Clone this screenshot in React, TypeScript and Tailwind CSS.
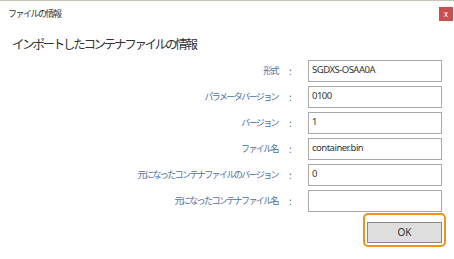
import React from 'react';

const rows: { label: string; value: string }[] = [
  { label: '形式', value: 'SGDXS-OSAA0A' },
  { label: 'パラメータバージョン', value: '0100' },
  { label: 'バージョン', value: '1' },
  { label: 'ファイル名', value: 'container.bin' },
  { label: '元になったコンテナファイルのバージョン', value: '0' },
  { label: '元になったコンテナファイル名', value: '' },
];

const jp = { fontFamily: '"Noto Sans CJK JP", "Noto Sans", sans-serif' };
const latin = { fontFamily: '"Noto Sans", "Noto Sans CJK JP", sans-serif' };

export default function App() {
  return (
    <div className="w-[454px] h-[259px] bg-white border-t border-[#c9c3b3] overflow-hidden" style={jp}>
      {/* title bar */}
      <div className="flex items-start justify-between pl-[8px] pr-[1px] pt-[6px]">
        <span className="text-[9px] leading-[14px] tracking-[-1.5px] text-[#333]">ファイルの情報</span>
        <button className="w-[14px] h-[14px] bg-[#c9504f] text-white text-[8px] leading-[14px] text-center">x</button>
      </div>

      <h1 className="mt-[13px] pl-[12px] text-[12.5px] leading-[20px] tracking-[-2.3px] text-[#333]">
        インポートしたコンテナファイルの情報
      </h1>

      <div className="mt-[6px] flex flex-col gap-[4px]">
        {rows.map((r) => (
          <div key={r.label} className="flex items-center h-[22px]">
            <div className="w-[280px] pr-[2px] text-right text-[9px] tracking-[-1.6px] text-[#4f6fa8] leading-[14px]">
              {r.label}
            </div>
            <div className="w-[28px] pl-[9px] text-[10px] text-[#4f6fa8] leading-[14px]">:</div>
            <div
              className="w-[134px] h-[22px] border border-[#aaaaaa] bg-white px-[3px] pt-[2px] text-[9.5px] leading-[13px] tracking-[-0.5px] text-[#333]"
              style={latin}
            >
              {r.value}
            </div>
          </div>
        ))}
      </div>

      <div className="flex justify-end pr-[8px] mt-[1px]">
        <div className="border-2 border-[#f0931d] rounded-[5px] p-[2px]">
          <button
            className="w-[75px] h-[21px] border border-[#8a8a8a] bg-[#dedede] text-[10px] text-[#333] leading-[19px]"
            style={latin}
          >
            OK
          </button>
        </div>
      </div>
    </div>
  );
}
